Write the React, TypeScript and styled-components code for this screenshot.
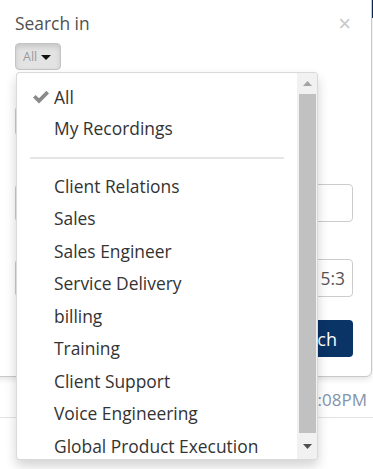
import styled, { createGlobalStyle } from "styled-components";

const GlobalStyle = createGlobalStyle`
	html, body {
		margin: 0;
		padding: 0;
		background: #fff;
		font-family: "Open Sans", "Liberation Sans", sans-serif;
	}
	* {
		box-sizing: border-box;
	}
`;

const Page = styled.div`
	position: relative;
	width: 373px;
	height: 469px;
	overflow: hidden;
	background: #fff;
`;

const TopBar = styled.div`
	height: 18px;
	background: #0c2c5c;
`;

const Rows = styled.div`
	height: 363px;
`;

const Row = styled.div`
	height: 37px;
	border-bottom: 1px solid #e2e2e2;
	display: flex;
	align-items: center;
	justify-content: flex-end;
	padding-right: 6px;
	color: #8394ab;
	font-size: 17px;
	white-space: nowrap;
`;

const Modal = styled.div`
	position: absolute;
	top: -6px;
	left: -6px;
	width: 378px;
	height: 383px;
	padding: 16px 18px 0 20px;
	background: #fff;
	border: 1px solid #c9c9c9;
	border-radius: 6px;
	box-shadow: 0 2px 6px rgba(0, 0, 0, 0.12);
`;

const Header = styled.div`
	display: flex;
	justify-content: space-between;
	align-items: flex-start;
	height: 31px;
`;

const Title = styled.h4`
	margin: 0;
	font-size: 17.4px;
	line-height: 24px;
	font-weight: 400;
	color: #505050;
`;

const Close = styled.button`
	border: 0;
	background: transparent;
	padding: 0;
	margin: 2px 2px 0 0;
	font-family: "Liberation Sans", sans-serif;
	font-size: 22px;
	line-height: 22px;
	font-weight: 400;
	color: #c8c8c8;
`;

const FilterWrap = styled.div`
	position: relative;
	margin-top: 1px;
`;

const Toggle = styled.button`
	display: inline-flex;
	align-items: center;
	gap: 4px;
	height: 27px;
	width: 46px;
	padding: 0 0 0 7px;
	border: 1px solid #c4c4c4;
	border-radius: 4px;
	background: #e3e3e3;
	box-shadow: inset 0 3px 5px rgba(0, 0, 0, 0.125);
	font-family: "Open Sans", sans-serif;
	font-size: 12.5px;
	color: #9a9a9a;
`;

const Caret = styled.span`
	width: 0;
	height: 0;
	margin-top: 1px;
	border-top: 5px solid #111;
	border-left: 5px solid transparent;
	border-right: 5px solid transparent;
`;

const Menu = styled.div`
	position: absolute;
	top: 29px;
	left: 1px;
	z-index: 2;
	width: 302px;
	height: 388px;
	display: flex;
	background: #fff;
	border: 1px solid rgba(0, 0, 0, 0.15);
	border-radius: 4px;
	box-shadow: 0 6px 12px rgba(0, 0, 0, 0.175);
	overflow: hidden;
`;

const List = styled.ul`
	flex: 1;
	margin: 0;
	padding: 8px 0 0;
	list-style: none;
	overflow: hidden;
`;

const Item = styled.li<{ $h?: number }>`
	display: flex;
	align-items: center;
	height: ${(p) => p.$h ?? 32.5}px;
	padding-left: 16px;
	font-size: 17.4px;
	color: #333;
	white-space: nowrap;
`;

const CheckSlot = styled.span`
	display: inline-flex;
	width: 21px;
	height: 16px;
	align-items: center;
`;

const Divider = styled.li`
	height: 2px;
	margin: 12px 13px 11px;
	background: #e5e5e5;
`;

const Rail = styled.div`
	width: 20px;
	display: flex;
	flex-direction: column;
	align-items: stretch;
	padding: 0 1px 0 2px;
	background: #f1f1f1;
`;

const RailButton = styled.div<{ $h: number; $dark?: boolean }>`
	height: ${(p) => p.$h}px;
	display: flex;
	align-items: center;
	justify-content: center;
	color: ${(p) => (p.$dark ? "#505050" : "#a3a3a3")};
`;

const Thumb = styled.div`
	height: 339px;
	background: #c1c1c1;
`;

const Form = styled.div`
	display: flex;
	flex-direction: column;
`;

const Input = styled.div<{ $mt: number; $w?: number; $h?: number }>`
	margin-top: ${(p) => p.$mt}px;
	width: ${(p) => (p.$w ? `${p.$w}px` : "100%")};
	height: ${(p) => p.$h ?? 38}px;
	border: 1px solid #ccc;
	border-radius: 4px;
	background: #fff;
	display: flex;
	align-items: center;
	justify-content: flex-end;
	padding-right: 7px;
	overflow: hidden;
	white-space: nowrap;
	font-size: 17.4px;
	color: #555;
`;

const SearchButton = styled.button`
	align-self: flex-end;
	margin-top: 23px;
	height: 37px;
	padding: 0 16px;
	border: 0;
	border-radius: 4px;
	background: #0a3366;
	color: #fff;
	font-family: "Open Sans", sans-serif;
	font-size: 18px;
`;

const groups = [
	"Client Relations",
	"Sales",
	"Sales Engineer",
	"Service Delivery",
	"billing",
	"Training",
	"Client Support",
	"Voice Engineering",
	"Global Product Execution",
];

function Check() {
	return (
		<svg width="16" height="14" viewBox="0 0 16 14">
			<polygon points="0,7.5 2.6,5 6,8.3 13.4,0.8 16,3.4 6,13.4" fill="#8a8a8a" />
		</svg>
	);
}

function Arrow({ down }: { down?: boolean }) {
	return (
		<svg width="9" height="5" viewBox="0 0 9 5">
			<polygon points={down ? "0,0 9,0 4.5,5" : "0,5 9,5 4.5,0"} fill="currentColor" />
		</svg>
	);
}

export default function App() {
	return (
		<Page>
			<GlobalStyle />
			<TopBar />
			<Rows />
			<Row>Oct 12, 2020 03:08PM</Row>
			<Modal>
				<Header>
					<Title>Search in</Title>
					<Close>×</Close>
				</Header>
				<FilterWrap>
					<Toggle>
						All <Caret />
					</Toggle>
					<Menu>
						<List>
							<Item $h={31}>
								<CheckSlot>
									<Check />
								</CheckSlot>
								All
							</Item>
							<Item>
								<CheckSlot />
								My Recordings
							</Item>
							<Divider />
							{groups.map((g) => (
								<Item key={g}>
									<CheckSlot />
									{g}
								</Item>
							))}
						</List>
						<Rail>
							<RailButton $h={21}>
								<Arrow />
							</RailButton>
							<Thumb />
							<RailButton $h={26} $dark>
								<Arrow down />
							</RailButton>
						</Rail>
					</Menu>
				</FilterWrap>
				<Form>
					<Input $mt={36} $w={250} $h={30} />
					<Input $mt={48} />
					<Input $mt={37}>10/12/2020 03:15:3</Input>
					<SearchButton>Search</SearchButton>
				</Form>
			</Modal>
		</Page>
	);
}
